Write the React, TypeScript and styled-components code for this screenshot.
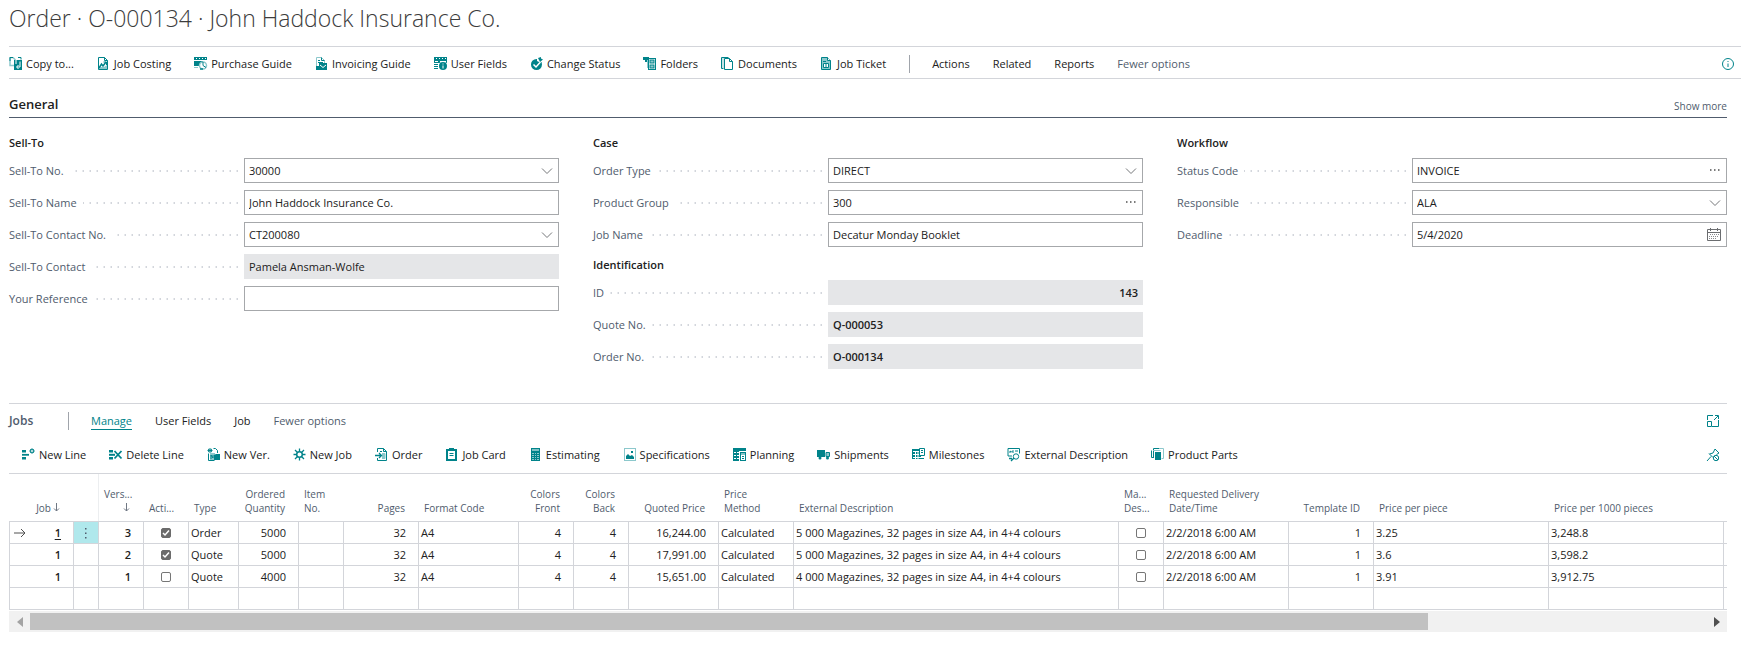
import React from "react";
import styled, { createGlobalStyle, css } from "styled-components";

const teal = "#00838a";
const pale = "#8cc8cc";
const ink = "#212121";
const slate = "#505c6d";
const line = "#d3d5da";

const GlobalStyle = createGlobalStyle`
  * { box-sizing: border-box; }
  body {
    margin: 0;
    background: #fff;
    color: ${ink};
    font-family: "Open Sans", "Noto Sans", sans-serif;
    font-size: 11px;
    line-height: 16px;
  }
  button, input, select { font: inherit; color: inherit; }
`;

/* ---------- icons ---------- */

const Glyph = styled.svg`
  display: block;
  flex: none;
  width: 14px;
  height: 14px;
`;

const icons: Record<string, React.ReactNode> = {
  copy: (
    <>
      <path d="M1 0.500h3l2 2v6H1z" fill="#fff" stroke={pale} strokeWidth="1.500" />
      <path d="M1 4v-3.500h3" fill="none" stroke={teal} />
      <rect x="5" y="3" width="8" height="10" fill={teal} />
      <path d="M7 3v4M11 4.500v5.500H8" fill="none" stroke="#fff" />
      <path d="M9.500 8L7.500 10l2 2" fill="none" stroke="#fff" />
      <path d="M9 0.500h3v2" fill="none" stroke={teal} />
    </>
  ),
  costing: (
    <>
      <path d="M1.500 0.500h6l3 3v9h-9z" fill="#fff" stroke={teal} />
      <path d="M7.500 0.500v3h3" fill="none" stroke={teal} />
      <path d="M2 12v-2l5 0 3-2v4z" fill={pale} />
      <path d="M2 11l2.500-4 1.500 2 3-4" fill="none" stroke={teal} strokeWidth="1.500" />
      <path d="M6.500 5h3v3" fill="none" stroke={teal} />
    </>
  ),
  purchase: (
    <>
      <rect x="0" y="0" width="13" height="3" fill={teal} />
      <path d="M2 1.500h1M5 1.500h1M8 1.500h1M11 1.500h1" stroke="#fff" />
      <path d="M0 4h9v3H5v2H0z" fill={teal} />
      <path d="M0 10.500h4" stroke={pale} />
      <circle cx="9" cy="8.500" r="3.500" fill="#fff" stroke={pale} strokeWidth="1.500" />
      <path d="M9 5v3.500l3 2" fill="none" stroke={teal} />
      <path d="M6 12h3" stroke={teal} strokeWidth="1.500" />
    </>
  ),
  invoicing: (
    <>
      <path d="M1.500 0.500h5l3 3v9h-8z" fill="#fff" stroke={pale} />
      <path d="M6.500 0.500v3h3M3 3.500h2M3 5.500h5" fill="none" stroke={teal} />
      <rect x="1" y="9" width="6" height="4" fill={teal} />
      <path d="M4 6h8v7H4z" fill={teal} />
      <path d="M5 8l3 2.500L11 8" fill="none" stroke="#fff" />
    </>
  ),
  userFields: (
    <>
      <path d="M0 0h13v6H0z" fill={teal} />
      <path d="M2 1.500h1M5 1.500h1M8 1.500h1M11 1.500h1M1 4.500h3M6 4.500h6" stroke="#fff" />
      <path d="M0 7.500h4M0 9.500h4M0 11.500h4" stroke={teal} />
      <circle cx="9" cy="9" r="4.500" fill="#fff" />
      <circle cx="9" cy="9" r="4" fill={teal} />
      <path d="M9 6.500v1M9 8.500v3" stroke="#fff" />
    </>
  ),
  status: (
    <>
      <circle cx="6.500" cy="7.500" r="5.500" fill={teal} />
      <path d="M7 0h7v5H9L7 4z" fill="#fff" />
      <path d="M3.500 7.500l2.500 2.500 4.500-5" fill="none" stroke="#fff" strokeWidth="1.500" />
      <path d="M8 1l3-1v1.500l2 1L10 5z" fill={teal} />
    </>
  ),
  folders: (
    <>
      <path d="M0 0h6v3H4v2H2V3H0z" fill={teal} />
      <path d="M4.500 3v8" stroke={pale} />
      <rect x="5.500" y="1.500" width="7" height="11" fill="#fff" stroke={teal} />
      <rect x="7" y="3" width="4" height="3" fill={pale} stroke={teal} />
      <rect x="7" y="8" width="4" height="3" fill={pale} stroke={teal} />
    </>
  ),
  documents: (
    <>
      <path d="M0.500 0.500h7M0.500 0.500v11h2" fill="none" stroke={teal} />
      <path d="M2 1v10" stroke={pale} />
      <path d="M3.500 1.500h5l3 3v8h-8z" fill="#fff" stroke={teal} />
      <path d="M8.500 1.500v3h3" fill="none" stroke={teal} />
    </>
  ),
  ticket: (
    <>
      <path d="M1.500 0.500h6l3 3v9h-9z" fill={pale} stroke={teal} />
      <path d="M7.500 0.500v3h3" fill="#fff" stroke={teal} />
      <path d="M3.500 6.500h5v4h-5zM6 6.500v4M3 4.500h3" fill="#fff" stroke={teal} />
    </>
  ),
  newLine: (
    <>
      <path d="M0 2h4v2.500H0zM0 9h4v2.500H0z" fill={teal} />
      <path d="M0 6.800h7" stroke={teal} strokeWidth="1.800" />
      <circle cx="10" cy="3" r="1.500" fill="#fff" stroke={teal} />
      <path d="M10 0v1.500M10 4.500V6M7 3h1.500M11.500 3H13M8 1l1 1M11 4l1 1M12 1l-1 1M8 5l1-1" stroke={teal} strokeWidth="0.800" />
    </>
  ),
  deleteLine: (
    <>
      <path d="M0 2h4v2.500H0zM0 9h4v2.500H0z" fill={teal} />
      <path d="M0 6.800h6" stroke={teal} strokeWidth="2" />
      <path d="M5.500 3l7 7.500M12.500 3l-7 7.500" stroke={teal} strokeWidth="1.800" />
    </>
  ),
  newVersion: (
    <>
      <path d="M3 0v5M0.500 2.500h5M1 1l4 3M5 1L1 4" stroke={teal} />
      <path d="M6.500 0.500h2l2 2v2.500" fill="none" stroke={teal} />
      <path d="M1.500 5.500v7h6" fill="none" stroke={teal} />
      <path d="M3 5h5v7H3z" fill={pale} />
      <path d="M4 11V7l2 3V7" fill="none" stroke={teal} />
      <path d="M7 7l2-1h4v6H7z" fill={teal} />
    </>
  ),
  newJob: (
    <>
      <circle cx="6.500" cy="6.500" r="2.800" fill="none" stroke={teal} strokeWidth="1.500" />
      <path
        d="M6.500 0.500v3M6.500 9.500v3M0.500 6.500h3M9.500 6.500h3M2 2l2.500 2.500M8.500 8.500L11 11M11 2L8.500 4.500M4.500 8.500L2 11"
        stroke={teal}
        strokeWidth="1.300"
      />
    </>
  ),
  order: (
    <>
      <path d="M2.500 4v-3.500h6l3 3v9h-9V10" fill="#fff" stroke={teal} />
      <path d="M8.500 0.500v3h3M5 3.500h2" fill="none" stroke={teal} />
      <path d="M7 10.500h3V5.500H7" fill={pale} stroke={pale} />
      <path d="M0 7.500h6M4 5l2.500 2.500L4 10" fill="none" stroke={teal} strokeWidth="1.300" />
    </>
  ),
  jobCard: (
    <>
      <path d="M1 1h11v12H1z" fill={teal} />
      <path d="M3 3h7v8H3z" fill="#fff" />
      <path d="M4 0h5v3H4z" fill={teal} />
      <path d="M4.500 5.500h4M4.500 7.500h4" stroke={teal} />
    </>
  ),
  estimating: (
    <>
      <path d="M2 0h9v13H2z" fill={teal} />
      <path d="M3 2h7" stroke="#fff" />
      <path d="M3 5.500h7M3 7.500h7M3 9.500h7M3 11.500h7" stroke={pale} />
      <path d="M5.500 4v8M7.500 4v8" stroke={teal} />
    </>
  ),
  specifications: (
    <>
      <rect x="1.500" y="0.500" width="11" height="12" fill="#fff" stroke={pale} />
      <path d="M3 11V8l2-2 2 2 2-1 2 2v2z" fill={teal} />
      <rect x="8" y="3" width="2" height="2" fill={teal} />
    </>
  ),
  planning: (
    <>
      <path d="M0 0h13v3H0z" fill={teal} />
      <path d="M0 3h6v10H0z" fill={teal} />
      <path d="M1 4.500h2M4 4.500h2M1 7.500h2M4 7.500h2M1 10.500h2M4 10.500h2" stroke="#fff" />
      <rect x="7.500" y="4.500" width="5" height="8" fill="#fff" stroke={teal} />
      <path d="M7 6h6M9 8.500h2M9 10.500h2" stroke={teal} />
    </>
  ),
  shipments: (
    <>
      <path d="M0 2h8v7H0z" fill={teal} />
      <path d="M9 4.500h3.500v4H9z" fill={pale} stroke={teal} />
      <circle cx="3" cy="10" r="1.500" fill={teal} />
      <circle cx="10.500" cy="10" r="1.500" fill={teal} />
    </>
  ),
  milestones: (
    <>
      <path d="M0 1h9v10H0z" fill={teal} />
      <path d="M1 3.500h8M1 6.500h8M1 9.500h8M3.500 3v8M6 3v8" stroke="#fff" />
      <path d="M7.500 0.500h5v7h-5z" fill="#fff" stroke={teal} />
      <path d="M9 4.500h2M9 2.500h2M7 10.500h5" stroke={teal} />
    </>
  ),
  external: (
    <>
      <path d="M1 0.500h11.500v5M1 0.500v7.500h4" fill="none" stroke={teal} />
      <path d="M3 5V3l1.500 1L6 2.500V5M8 3h3" fill="none" stroke={teal} />
      <circle cx="9" cy="8.500" r="2.700" fill="#fff" stroke={teal} />
      <path d="M7 10l-3 3M2 10.500h3" stroke={teal} strokeWidth="1.300" />
    </>
  ),
  parts: (
    <>
      <path d="M0.500 2.500v7h2M2.500 10V0.500h8" fill="none" stroke={teal} />
      <path d="M8 0.500h4.500v10h-2" fill="none" stroke={pale} />
      <path d="M4 4h6v8H4z" fill={teal} />
      <path d="M2 2.500h7.500" stroke={pale} />
    </>
  ),
  info: (
    <>
      <circle cx="7" cy="7" r="5.500" fill="none" stroke={teal} />
      <path d="M7 4v1M7 6.500v3.500" stroke={teal} />
    </>
  ),
  expand: (
    <>
      <path d="M1.500 6V1.500H7M12.500 6v6.500H6" fill="none" stroke={teal} />
      <path d="M1.500 7.500h4v5h-4z" fill="none" stroke={teal} />
      <path d="M8 6l4-4M9 1.500h3.500V5" fill="none" stroke={teal} />
    </>
  ),
  unpin: (
    <>
      <path d="M1 13l4-4.500M3 5.500l4 4M3.500 6L7 5l2-4 4 4-2.500 1.500" fill="none" stroke={teal} />
      <circle cx="10" cy="10" r="2.700" fill="#fff" stroke={teal} />
      <path d="M8 8l4 4" stroke={teal} />
    </>
  ),
  calendar: (
    <>
      <path d="M0.500 1.500h13v11H0.500zM0.500 4.500h13M3.500 0v3M10.500 0v3" fill="none" stroke="#6b6d70" />
      <path d="M3 6.500h9M2 8.500h10M2 10.500h7" stroke="#8a8c90" strokeDasharray="1 1" />
    </>
  ),
  more: (
    <path d="M3 6h1.500M7 6h1.500M11 6h1.500" stroke="#505050" strokeWidth="1.300" />
  ),
};

const Icon = ({ name }: { name: string }) => (
  <Glyph viewBox="0 0 14 14" aria-hidden="true">
    {icons[name]}
  </Glyph>
);

/* ---------- page ---------- */

const Page = styled.main`
  padding: 0 14px 17px 9px;
`;

const Title = styled.h1`
  margin: 0;
  height: 46px;
  font-size: 23px;
  line-height: 36px;
  font-weight: 300;
  color: #3c3c3c;
  white-space: nowrap;
`;

const ActionBar = styled.nav`
  display: flex;
  align-items: center;
  height: 33px;
  margin-right: -14px;
  padding: 2px 6px 0 0;
  border-top: 1px solid ${line};
  border-bottom: 1px solid ${line};
`;

const Action = styled.button<{ $muted?: boolean; $active?: boolean }>`
  display: flex;
  align-items: center;
  gap: 3px;
  flex: none;
  margin-right: 23px;
  padding: 0;
  border: 0;
  background: none;
  white-space: nowrap;
  color: ${(p) => (p.$active ? teal : p.$muted ? slate : ink)};
  ${(p) =>
    p.$active &&
    css`
      box-shadow: 0 1px 0 ${teal};
    `}
`;

const Divider = styled.span`
  flex: none;
  width: 1px;
  height: 18px;
  margin-right: 22px;
  background: #a0a4ab;
`;

const IconButton = styled.button`
  display: flex;
  flex: none;
  margin-left: auto;
  padding: 0;
  border: 0;
  background: none;
`;

/* ---------- general tab ---------- */

const TabHeader = styled.header`
  display: flex;
  align-items: flex-end;
  justify-content: space-between;
  height: 39px;
  padding-bottom: 3px;
  border-bottom: 1px solid ${slate};
`;

const TabTitle = styled.h2`
  margin: 0;
  font-size: 13px;
  line-height: 20px;
  font-weight: 600;
`;

const SmallLink = styled.a`
  font-size: 10px;
  color: ${slate};
  text-decoration: none;
`;

const FieldColumns = styled.div`
  display: grid;
  grid-template-columns: repeat(3, 1fr);
  gap: 34px;
  padding: 14px 0 34px;
`;

const GroupTitle = styled.h3`
  margin: 0;
  height: 26px;
  padding-top: 3px;
  font-size: 11px;
  line-height: 16px;
  font-weight: 600;
`;

const FieldRow = styled.div`
  display: grid;
  grid-template-columns: 235px 1fr;
  align-items: center;
  height: 25px;
  margin-bottom: 7px;

  &:last-child {
    margin-bottom: 0;
  }
`;

const FieldLabel = styled.label`
  display: flex;
  align-items: center;
  color: ${slate};
  white-space: nowrap;
  padding-right: 6px;

  &::after {
    content: "";
    flex: 1;
    height: 2px;
    margin-left: 6px;
    background: repeating-linear-gradient(to left, #d3d6dc 0 1px, #e9ebee 1px 2px, transparent 2px 7px);
  }
`;

const FieldBox = styled.div<{ $readOnly?: boolean }>`
  display: grid;
  grid-template-columns: 1fr auto;
  align-items: center;
  height: 25px;
  border: 1px solid ${(p) => (p.$readOnly ? "#e5e6e8" : "#a6a8ab")};
  background: ${(p) => (p.$readOnly ? "#e5e6e8" : "#fff")};
`;

const control = css<{ $strong?: boolean; $right?: boolean }>`
  grid-row: 1;
  grid-column: 1 / -1;
  width: 100%;
  height: 23px;
  margin: 0;
  padding: 0 4px;
  border: 0;
  outline: 0;
  background: none;
  appearance: none;
  font-weight: ${(p) => (p.$strong ? 600 : 400)};
  text-align: ${(p) => (p.$right ? "right" : "left")};
`;

const TextInput = styled.input`
  ${control}
`;

const SelectInput = styled.select`
  ${control}
`;

const FieldButton = styled.button`
  display: flex;
  grid-row: 1;
  grid-column: 2;
  margin-right: 5px;
  padding: 0;
  border: 0;
  background: none;
`;

const Chevron = styled.svg`
  grid-row: 1;
  grid-column: 2;
  width: 12px;
  height: 8px;
  margin-right: 5px;
  pointer-events: none;
`;

type FieldDef = {
  label: string;
  value: string;
  kind?: "text" | "select" | "more" | "calendar" | "readonly";
  strong?: boolean;
  right?: boolean;
};

const Field = ({ label, value, kind = "text", strong, right }: FieldDef) => {
  const id = React.useId();
  return (
    <FieldRow>
      <FieldLabel htmlFor={id}>{label}</FieldLabel>
      <FieldBox $readOnly={kind === "readonly"}>
        {kind === "select" ? (
          <>
            <SelectInput id={id} defaultValue={value}>
              <option>{value}</option>
            </SelectInput>
            <Chevron viewBox="0 0 12 8" aria-hidden="true">
              <path d="M1 1.500l5 5 5-5" fill="none" stroke="#75777a" />
            </Chevron>
          </>
        ) : (
          <TextInput
            id={id}
            defaultValue={value}
            readOnly={kind === "readonly"}
            $strong={strong}
            $right={right}
          />
        )}
        {kind === "more" && (
          <FieldButton type="button" aria-label={`Look up ${label}`}>
            <Icon name="more" />
          </FieldButton>
        )}
        {kind === "calendar" && (
          <FieldButton type="button" aria-label={`Choose ${label}`}>
            <Icon name="calendar" />
          </FieldButton>
        )}
      </FieldBox>
    </FieldRow>
  );
};

const columns: { title: string; fields: FieldDef[] }[][] = [
  [
    {
      title: "Sell-To",
      fields: [
        { label: "Sell-To No.", value: "30000", kind: "select" },
        { label: "Sell-To Name", value: "John Haddock Insurance Co." },
        { label: "Sell-To Contact No.", value: "CT200080", kind: "select" },
        { label: "Sell-To Contact", value: "Pamela Ansman-Wolfe", kind: "readonly" },
        { label: "Your Reference", value: "" },
      ],
    },
  ],
  [
    {
      title: "Case",
      fields: [
        { label: "Order Type", value: "DIRECT", kind: "select" },
        { label: "Product Group", value: "300", kind: "more" },
        { label: "Job Name", value: "Decatur Monday Booklet" },
      ],
    },
    {
      title: "Identification",
      fields: [
        { label: "ID", value: "143", kind: "readonly", strong: true, right: true },
        { label: "Quote No.", value: "Q-000053", kind: "readonly", strong: true },
        { label: "Order No.", value: "O-000134", kind: "readonly", strong: true },
      ],
    },
  ],
  [
    {
      title: "Workflow",
      fields: [
        { label: "Status Code", value: "INVOICE", kind: "more" },
        { label: "Responsible", value: "ALA", kind: "select" },
        { label: "Deadline", value: "5/4/2020", kind: "calendar" },
      ],
    },
  ],
];

/* ---------- jobs part ---------- */

const Jobs = styled.section`
  border-top: 1px solid ${line};
`;

const JobsBar = styled.header`
  display: flex;
  align-items: center;
  height: 34px;
  padding-right: 7px;
`;

const JobsTitle = styled.h2`
  margin: 0;
  width: 59px;
  font-size: 12px;
  line-height: 16px;
  font-weight: 600;
  color: ${slate};
`;

const JobsActions = styled.div`
  display: flex;
  align-items: center;
  height: 36px;
  padding: 0 7px 2px 13px;
  border-bottom: 1px solid ${line};
`;

const Grid = styled.div`
  overflow: hidden;
`;

const Table = styled.table`
  width: 100%;
  table-layout: fixed;
  border-spacing: 0;
  border-bottom: 1px solid ${line};
`;

type Align = "left" | "right" | "center";

const Head = styled.th<{ $align: Align; $lined?: boolean }>`
  height: 47px;
  padding: 0 13px 6px 5px;
  vertical-align: bottom;
  font-size: 10px;
  line-height: 14px;
  font-weight: 400;
  color: ${slate};
  white-space: pre;
  text-align: ${(p) => p.$align};
  border-left: 1px solid ${(p) => (p.$lined ? "#eceef0" : "transparent")};
`;

const Cell = styled.td<{ $align: Align; $strong?: boolean; $marked?: boolean }>`
  height: 22px;
  padding: 0 ${(p) => (p.$align === "right" ? 12 : 2)}px 0 2px;
  border-top: 1px solid ${line};
  border-left: 1px solid ${line};
  text-align: ${(p) => p.$align};
  font-weight: ${(p) => (p.$strong ? 600 : 400)};
  white-space: nowrap;
  line-height: 16px;
  background: ${(p) => (p.$marked ? "#b0e8ec" : "none")};
`;

const FirstCell = styled.div`
  display: flex;
  align-items: center;
  justify-content: space-between;
`;

const JobLink = styled.a<{ $current: boolean }>`
  margin-left: auto;
  color: inherit;
  text-decoration: ${(p) => (p.$current ? "underline" : "none")};
  text-underline-offset: 2px;
`;

const RowArrow = styled.svg`
  width: 12px;
  height: 12px;
  margin-left: 2px;
`;

const SortArrow = styled.svg`
  width: 7px;
  height: 9px;
  margin-left: 2px;
`;

const MenuButton = styled.button`
  display: flex;
  justify-content: center;
  width: 100%;
  padding: 0;
  border: 0;
  background: none;
`;

const Tick = styled.input`
  appearance: none;
  display: block;
  width: 10px;
  height: 10px;
  margin: 0 auto;
  border: 1px solid #767676;
  border-radius: 2px;
  background: #fff;

  &:checked {
    background: #6b6b6b;
    border-color: #6b6b6b;
  }
`;

const TickBox = styled.span`
  display: grid;
  justify-content: center;
  align-items: center;

  & > * {
    grid-area: 1 / 1;
  }
`;

const TickMark = styled.svg`
  width: 10px;
  height: 10px;
  pointer-events: none;
`;

const CheckCell = ({ checked, label }: { checked: boolean; label: string }) => (
  <TickBox>
    <Tick type="checkbox" defaultChecked={checked} aria-label={label} />
    {checked && (
      <TickMark viewBox="0 0 10 10" aria-hidden="true">
        <path d="M2 5l2 2 4-4.500" fill="none" stroke="#fff" strokeWidth="1.500" />
      </TickMark>
    )}
  </TickBox>
);

const Scrollbar = styled.div`
  display: flex;
  align-items: center;
  height: 21px;
  margin-top: 1px;
  background: #f1f1f1;
`;

const ScrollButton = styled.button`
  display: flex;
  align-items: center;
  justify-content: center;
  flex: none;
  width: 21px;
  height: 21px;
  padding: 0;
  border: 0;
  background: none;
`;

const Track = styled.div`
  flex: 1;
  height: 17px;
`;

const Thumb = styled.div<{ $percent: number }>`
  height: 100%;
  width: ${(p) => p.$percent}%;
  background: #c1c1c1;
`;

const SortGlyph = () => (
  <SortArrow viewBox="0 0 7 9" aria-label="sorted">
    <path d="M3.500 0v8M1 5.500l2.500 2.500 2.500-2.500" fill="none" stroke="#6f7783" />
  </SortArrow>
);

const gridColumns: { head: React.ReactNode; width?: number; align: Align; lined?: boolean }[] = [
  { head: <>Job<SortGlyph /></>, width: 64, align: "right" },
  { head: "", width: 25, align: "center" },
  { head: <>{"Vers...\n"}<SortGlyph /></>, width: 45, align: "right", lined: true },
  { head: "Acti...", width: 45, align: "left" },
  { head: "Type", width: 50, align: "left" },
  { head: "Ordered\nQuantity", width: 60, align: "right" },
  { head: "Item\nNo.", width: 45, align: "left" },
  { head: "Pages", width: 75, align: "right" },
  { head: "Format Code", width: 100, align: "left" },
  { head: "Colors\nFront", width: 55, align: "right" },
  { head: "Colors\nBack", width: 55, align: "right" },
  { head: "Quoted Price", width: 90, align: "right" },
  { head: "Price\nMethod", width: 75, align: "left" },
  { head: "External Description", width: 325, align: "left" },
  { head: "Ma...\nDes...", width: 45, align: "left" },
  { head: "Requested Delivery\nDate/Time", width: 125, align: "left" },
  { head: "Template ID", width: 85, align: "right" },
  { head: "Price per piece", width: 175, align: "left" },
  { head: "Price per 1000 pieces", width: 175, align: "left" },
  { head: "", align: "left" },
];

const rows = [
  { version: "3", active: true, type: "Order", qty: "5000", price: "16,244.00", text: "5 000", piece: "3.25", thousand: "3,248.8" },
  { version: "2", active: true, type: "Quote", qty: "5000", price: "17,991.00", text: "5 000", piece: "3.6", thousand: "3,598.2" },
  { version: "1", active: false, type: "Quote", qty: "4000", price: "15,651.00", text: "4 000", piece: "3.91", thousand: "3,912.75" },
];

const topActions: [string, string][] = [
  ["copy", "Copy to..."],
  ["costing", "Job Costing"],
  ["purchase", "Purchase Guide"],
  ["invoicing", "Invoicing Guide"],
  ["userFields", "User Fields"],
  ["status", "Change Status"],
  ["folders", "Folders"],
  ["documents", "Documents"],
  ["ticket", "Job Ticket"],
];

const jobActions: [string, string][] = [
  ["newLine", "New Line"],
  ["deleteLine", "Delete Line"],
  ["newVersion", "New Ver."],
  ["newJob", "New Job"],
  ["order", "Order"],
  ["jobCard", "Job Card"],
  ["estimating", "Estimating"],
  ["specifications", "Specifications"],
  ["planning", "Planning"],
  ["shipments", "Shipments"],
  ["milestones", "Milestones"],
  ["external", "External Description"],
  ["parts", "Product Parts"],
];

const IconAction = ({ icon, label }: { icon: string; label: string }) => (
  <Action type="button">
    <Icon name={icon} />
    {label}
  </Action>
);

export default function App() {
  return (
    <>
      <GlobalStyle />
      <Page>
        <Title>Order · O-000134 · John Haddock Insurance Co.</Title>

        <ActionBar aria-label="Order actions">
          {topActions.map(([icon, label]) => (
            <IconAction key={label} icon={icon} label={label} />
          ))}
          <Divider />
          <Action type="button">Actions</Action>
          <Action type="button">Related</Action>
          <Action type="button">Reports</Action>
          <Action type="button" $muted>Fewer options</Action>
          <IconButton type="button" aria-label="Details">
            <Icon name="info" />
          </IconButton>
        </ActionBar>

        <section>
          <TabHeader>
            <TabTitle>General</TabTitle>
            <SmallLink href="#more">Show more</SmallLink>
          </TabHeader>
          <FieldColumns>
            {columns.map((groups, index) => (
              <div key={index}>
                {groups.map((group) => (
                  <React.Fragment key={group.title}>
                    <GroupTitle>{group.title}</GroupTitle>
                    {group.fields.map((field) => (
                      <Field key={field.label} {...field} />
                    ))}
                  </React.Fragment>
                ))}
              </div>
            ))}
          </FieldColumns>
        </section>

        <Jobs>
          <JobsBar>
            <JobsTitle>Jobs</JobsTitle>
            <Divider />
            <Action type="button" $active>Manage</Action>
            <Action type="button">User Fields</Action>
            <Action type="button">Job</Action>
            <Action type="button" $muted>Fewer options</Action>
            <IconButton type="button" aria-label="Expand">
              <Icon name="expand" />
            </IconButton>
          </JobsBar>
          <JobsActions>
            {jobActions.map(([icon, label]) => (
              <IconAction key={label} icon={icon} label={label} />
            ))}
            <IconButton type="button" aria-label="Unpin">
              <Icon name="unpin" />
            </IconButton>
          </JobsActions>

          <Grid>
            <Table>
              <colgroup>
                {gridColumns.map((column, index) => (
                  <col key={index} width={column.width} />
                ))}
              </colgroup>
              <thead>
                <tr>
                  {gridColumns.map((column, index) => (
                    <Head key={index} $align={column.align} $lined={column.lined}>
                      {column.head}
                    </Head>
                  ))}
                </tr>
              </thead>
              <tbody>
                {rows.map((row, index) => (
                  <tr key={row.version}>
                    <Cell $align="right" $strong>
                      <FirstCell>
                        {index === 0 && (
                          <RowArrow viewBox="0 0 12 12" aria-hidden="true">
                            <path d="M0 6h11M7 2l4 4-4 4" fill="none" stroke="#505050" />
                          </RowArrow>
                        )}
                        <JobLink href="#job" $current={index === 0}>1</JobLink>
                      </FirstCell>
                    </Cell>
                    <Cell $align="center" $marked={index === 0}>
                      {index === 0 && (
                        <MenuButton type="button" aria-label="Row menu">
                          <Glyph viewBox="0 0 14 14" aria-hidden="true">
                            <path d="M6 2h1.500v1.500H6zM6 6.500h1.500V8H6zM6 11h1.500v1.500H6z" fill={slate} />
                          </Glyph>
                        </MenuButton>
                      )}
                    </Cell>
                    <Cell $align="right" $strong>{row.version}</Cell>
                    <Cell $align="center">
                      <CheckCell checked={row.active} label="Active" />
                    </Cell>
                    <Cell $align="left">{row.type}</Cell>
                    <Cell $align="right">{row.qty}</Cell>
                    <Cell $align="left" />
                    <Cell $align="right">32</Cell>
                    <Cell $align="left">A4</Cell>
                    <Cell $align="right">4</Cell>
                    <Cell $align="right">4</Cell>
                    <Cell $align="right">{row.price}</Cell>
                    <Cell $align="left">Calculated</Cell>
                    <Cell $align="left">{row.text} Magazines, 32 pages in size A4, in 4+4 colours</Cell>
                    <Cell $align="center">
                      <CheckCell checked={false} label="Manual description" />
                    </Cell>
                    <Cell $align="left">2/2/2018 6:00 AM</Cell>
                    <Cell $align="right">1</Cell>
                    <Cell $align="left">{row.piece}</Cell>
                    <Cell $align="left">{row.thousand}</Cell>
                    <Cell $align="left" />
                  </tr>
                ))}
                <tr>
                  {gridColumns.map((_, index) => (
                    <Cell key={index} $align="left" />
                  ))}
                </tr>
              </tbody>
            </Table>
          </Grid>
          <Scrollbar>
            <ScrollButton type="button" aria-label="Scroll left">
              <svg width="6" height="10" viewBox="0 0 6 10" aria-hidden="true">
                <path d="M6 0v10L0 5z" fill="#a3a3a3" />
              </svg>
            </ScrollButton>
            <Track>
              <Thumb $percent={83.4} />
            </Track>
            <ScrollButton type="button" aria-label="Scroll right">
              <svg width="6" height="10" viewBox="0 0 6 10" aria-hidden="true">
                <path d="M0 0v10l6-5z" fill="#505050" />
              </svg>
            </ScrollButton>
          </Scrollbar>
        </Jobs>
      </Page>
    </>
  );
}
